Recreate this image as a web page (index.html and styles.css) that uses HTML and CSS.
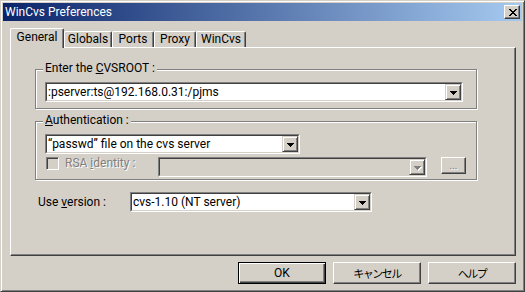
FILE: index.html
```html
<!DOCTYPE html>
<html lang="ja">
<head>
  <meta charset="UTF-8" />
  <title>WinCvs Preferences</title>
  <link rel="stylesheet" href="styles.css">
</head>
<body>
  <div class="window">
    <!-- TITLE BAR -->
    <div class="titlebar">
      <span class="title">WinCvs Preferences</span>
      <span class="close">
        <svg width="8" height="7" viewBox="0 0 8 7"><path d="M0 0h2v1H0zM6 0h2v1H6zM1 1h2v1H1zM5 1h2v1H5zM2 2h4v1H2zM3 3h2v1H3zM2 4h4v1H2zM1 5h2v1H1zM5 5h2v1H5zM0 6h2v1H0zM6 6h2v1H6z"/></svg>
      </span>
    </div>

    <div class="body">
      <!-- TABS -->
      <div class="tabs">
        <div class="tab tab-active">General</div>
        <div class="tab">Globals</div>
        <div class="tab">Ports</div>
        <div class="tab">Proxy</div>
        <div class="tab">WinCvs</div>
      </div>

      <div class="panel">
        <!-- CVSROOT -->
        <div class="group">
          <div class="group-title">Enter the <u>C</u>VSROOT :</div>
          <div class="combo combo-root">
            <div class="combo-field">
              <span class="combo-value">:pserver:ts@192.168.0.31:/pjms</span>
              <span class="drop"><svg width="7" height="4" viewBox="0 0 7 4"><path d="M0 0h7v1H0zM1 1h5v1H1zM2 2h3v1H2zM3 3h1v1H3z"/></svg></span>
            </div>
          </div>
        </div>

        <!-- Authentication -->
        <div class="group group-auth">
          <div class="group-title"><u>A</u>uthentication :</div>
          <div class="combo combo-auth">
            <div class="combo-field">
              <span class="combo-value">“passwd” file on the cvs server</span>
              <span class="drop"><svg width="7" height="4" viewBox="0 0 7 4"><path d="M0 0h7v1H0zM1 1h5v1H1zM2 2h3v1H2zM3 3h1v1H3z"/></svg></span>
            </div>
          </div>
          <div class="rsa-row">
            <span class="check"></span>
            <span class="rsa-label disabled">RSA <u>i</u>dentity :</span>
            <div class="combo combo-rsa combo-disabled">
              <div class="combo-field">
                <span class="combo-value"></span>
                <span class="drop"><svg width="7" height="4" viewBox="0 0 7 4"><path d="M0 0h7v1H0zM1 1h5v1H1zM2 2h3v1H2zM3 3h1v1H3z"/></svg></span>
              </div>
            </div>
            <span class="btn btn-small disabled">...</span>
          </div>
        </div>

        <!-- Version -->
        <div class="version-row">
          <span class="field-label">Use <u>v</u>ersion :</span>
          <div class="combo combo-version">
            <div class="combo-field">
              <span class="combo-value">cvs-1.10 (NT server)</span>
              <span class="drop"><svg width="7" height="4" viewBox="0 0 7 4"><path d="M0 0h7v1H0zM1 1h5v1H1zM2 2h3v1H2zM3 3h1v1H3z"/></svg></span>
            </div>
          </div>
        </div>
      </div>

      <!-- BUTTONS -->
      <div class="buttons">
        <span class="btn btn-default">OK</span>
        <span class="btn btn-jp">キャンセル</span>
        <span class="btn btn-jp">ヘルプ</span>
      </div>
    </div>
  </div>
</body>
</html>
```

FILE: styles.css
```css
/* GLOBAL */
* { box-sizing:border-box; }
body { margin:0; background:#d4d0c8; color:#000; font:12px Roboto, "Noto Sans CJK JP", sans-serif; }
u { text-decoration:underline; text-underline-offset:1px; }
.disabled { color:#808080; text-shadow:1px 1px 0 #fff; }

/* WINDOW FRAME */
.window { width:525px; height:292px; display:flex; flex-direction:column; padding:2px; background:#d4d0c8;
  border:1px solid; border-color:#d4d0c8 #404040 #404040 #d4d0c8;
  box-shadow:inset 1px 1px #fff, inset -1px -1px #808080; }

/* TITLE BAR */
.titlebar { height:18px; flex:none; display:flex; align-items:center; justify-content:space-between;
  padding:0 2px 0 2px; background:linear-gradient(to right, #0a246a, #a6caf0); color:#fff; }
.title { line-height:18px; }
.close { width:16px; height:14px; display:flex; align-items:center; justify-content:center; background:#d4d0c8;
  border:1px solid; border-color:#fff #404040 #404040 #fff; box-shadow:inset -1px -1px #808080; }
.close svg { display:block; margin:0 0 0 1px; fill:#000; }

.body { flex:1; padding:7px 6px 0 7px; }

/* TABS */
.tabs { display:grid; grid-template-columns:54px 48px 42px 42px 50px; height:19px; align-items:end; }
.tab { height:16px; display:flex; align-items:center; justify-content:center; padding-bottom:1px;
  border:1px solid; border-bottom:0; border-color:#fff #404040 #fff #fff; border-radius:2px 2px 0 0;
  box-shadow:inset -1px 0 #808080; }
.tab-active { height:20px; margin-bottom:-1px; position:relative; z-index:1; background:#d4d0c8; padding-bottom:3px; }

/* PANEL */
.panel { height:209px; padding:21px 0 0 24px;
  border:1px solid; border-color:#fff #404040 #404040 #fff; box-shadow:inset -1px -1px #808080; }

/* GROUP BOXES */
.group { width:442px; padding:0 9px 6px; border:1px solid #808080; box-shadow:inset 1px 1px #fff, 1px 1px #fff; }
.group-auth { margin-top:12px; padding-bottom:2px; }
.group-title { width:fit-content; margin:-8px 0 7px -2px; padding:0 2px; line-height:13px; background:#d4d0c8; }

/* COMBO BOXES */
.combo { flex:none; height:20px; border:1px solid; border-color:#808080 #fff #fff #808080; }
.combo-field { height:100%; display:flex; background:#fff;
  border:1px solid; border-color:#404040 #d4d0c8 #d4d0c8 #404040; }
.combo-value { flex:1; padding-left:1px; line-height:16px; white-space:nowrap; overflow:hidden; }
.drop { width:16px; height:16px; display:flex; align-items:center; justify-content:center; background:#d4d0c8;
  border:1px solid; border-color:#d4d0c8 #404040 #404040 #d4d0c8; box-shadow:inset 1px 1px #fff, inset -1px -1px #808080; }
.drop svg { display:block; fill:#000; margin-top:1px; }
.combo-root { width:418px; }
.combo-auth { width:255px; }
.combo-rsa { width:269px; }
.combo-version { width:242px; }
.combo-disabled .combo-field { background:#d4d0c8; }
.combo-disabled .drop svg { fill:#808080; filter:drop-shadow(1px 1px 0 #fff); }

/* BUTTONS */
.buttons { display:flex; justify-content:flex-end; gap:7px; margin-top:6px; }
.btn { flex:none; width:88px; height:22px; display:flex; align-items:center; justify-content:center; background:#d4d0c8;
  border:1px solid; border-color:#fff #404040 #404040 #fff; box-shadow:inset -1px -1px #808080; }
.btn-default { border-color:#000; box-shadow:inset 1px 1px #fff, inset -1px -1px #404040, inset -2px -2px #808080; }
.btn-jp { font-size:11px; letter-spacing:-1.5px; }

/* RSA ROW */
.rsa-row { display:flex; align-items:flex-start; margin-top:3px; }
.check { flex:none; width:13px; height:13px; margin-left:1px; background:#d4d0c8;
  border:1px solid; border-color:#808080 #fff #fff #808080; box-shadow:inset 1px 1px #404040, inset -1px -1px #d4d0c8; }
.rsa-label { flex:none; width:93px; margin-left:6px; line-height:13px; }
.btn-small { width:25px; height:17px; margin-left:14px; font-size:10px; line-height:12px; }

/* VERSION ROW */
.version-row { display:flex; align-items:center; margin-top:12px; padding-left:3px; }
.field-label { flex:none; width:92px; }
```
